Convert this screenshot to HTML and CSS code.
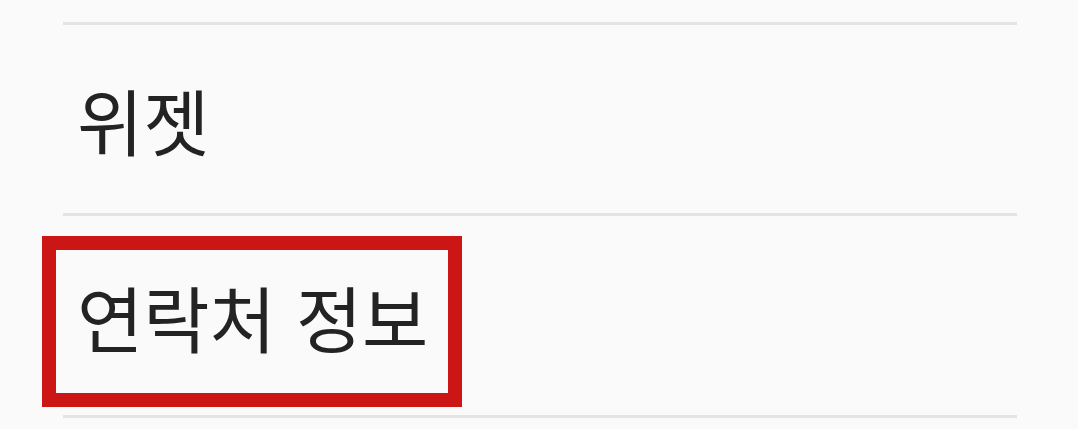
FILE: index.html
```html
<!DOCTYPE html>
<html lang="ko">
<head>
  <meta charset="UTF-8">
  <meta name="viewport" content="width=device-width, initial-scale=1.0">
  <title>설정</title>
  <link rel="stylesheet" href="styles.css">
</head>
<body>
  <div class="list">
    <div class="row row-widget">
      <span class="label">위젯</span>
    </div>
    <div class="row row-contact">
      <span class="label">연락처 정보</span>
      <!-- 강조 표시 -->
      <div class="highlight"></div>
    </div>
    <div class="row row-end"></div>
  </div>
</body>
</html>
```

FILE: styles.css
```css
body {
  margin: 0;
  background-color: #fafafa;
  font-family: "Noto Sans CJK KR", "Noto Sans", sans-serif;
  color: #232323;
}

.list {
  padding: 22px 61px 0 63px;
}

.row {
  position: relative;
  display: flex;
  align-items: center;
  border-top: 3px solid #e4e4e4;
  padding-left: 14px;
}

.row-widget {
  height: 188px;
}

.row-contact {
  height: 199px;
}

.row-end {
  height: 11px;
}

.label {
  font-size: 72px;
  line-height: 1;
}

.highlight {
  position: absolute;
  left: -21px;
  top: 20px;
  width: 420px;
  height: 171px;
  box-sizing: border-box;
  border: 14px solid #cc1515;
}
```
